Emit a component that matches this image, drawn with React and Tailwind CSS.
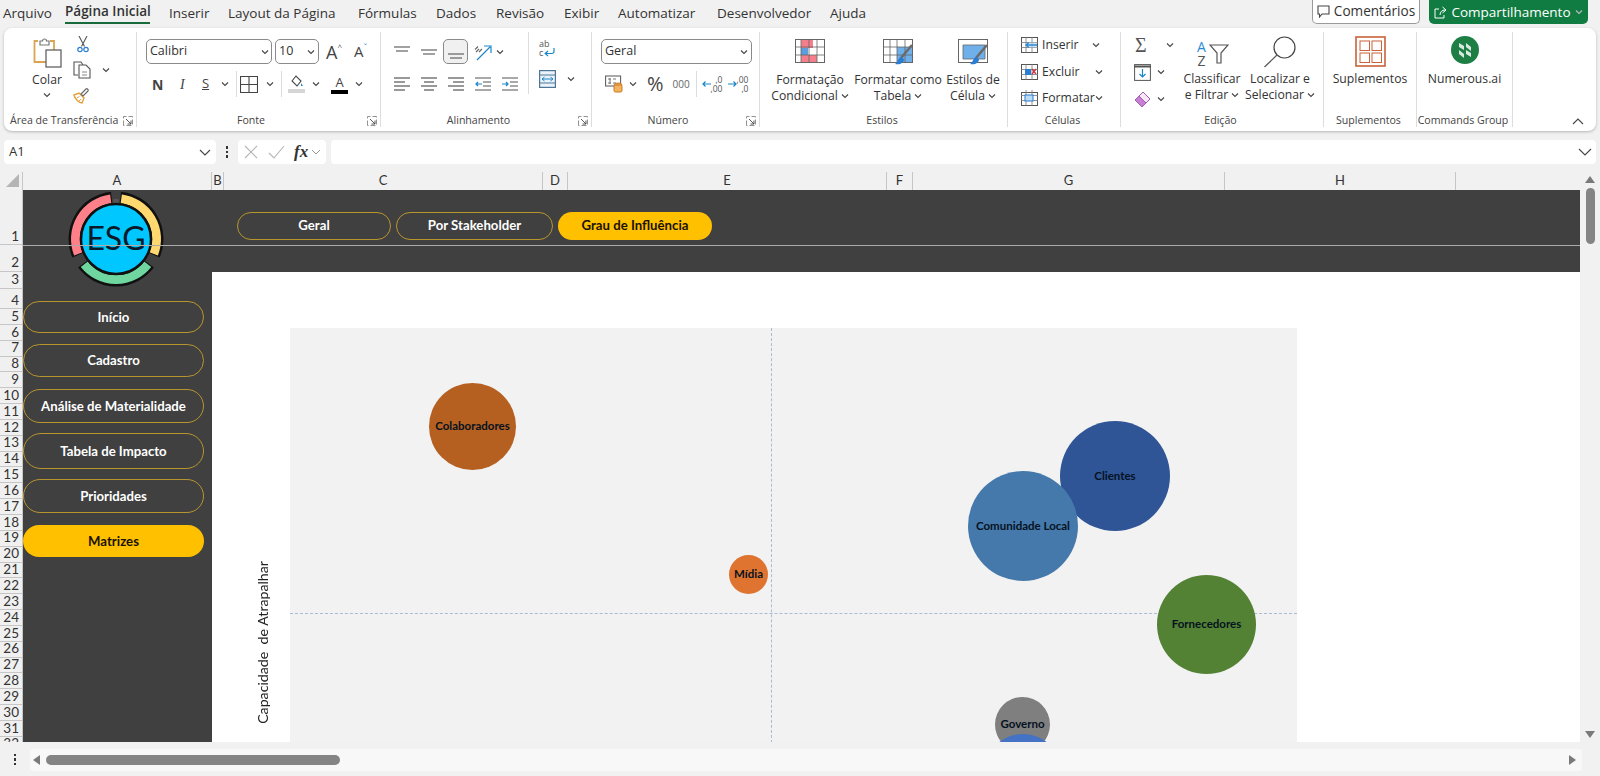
const tabs = [
  ['Arquivo', 'w-[48px] ml-[3px]'],
  ['Inserir', 'w-[39px] ml-[19px]'],
  ['Layout da Página', 'w-[109px] ml-[20px]'],
  ['Fórmulas', 'w-[57px] ml-[21px]'],
  ['Dados', 'w-[40px] ml-[21px]'],
  ['Revisão', 'w-[48px] ml-[20px]'],
  ['Exibir', 'w-[34px] ml-[20px]'],
  ['Automatizar', 'w-[78px] ml-[20px]'],
  ['Desenvolvedor', 'w-[93px] ml-[21px]'],
  ['Ajuda', 'w-[37px] ml-[20px]'],
]

const columns = [
  ['A', 'w-[189px]'],
  ['B', 'w-[12px]'],
  ['C', 'w-[319px]'],
  ['D', 'w-[25px]'],
  ['E', 'w-[319px]'],
  ['F', 'w-[26px]'],
  ['G', 'w-[312px]'],
  ['H', 'w-[231px]'],
]

const rowsSmall = Array.from({ length: 28 }, (_, i) => i + 5)

const sideButtons = [
  ['Início', 'h-[32px] mt-[13px]'],
  ['Cadastro', 'h-[33px] mt-[11px]'],
  ['Análise de Materialidade', 'h-[34px] mt-[12px]'],
  ['Tabela de Impacto', 'h-[36px] mt-[10px]'],
  ['Prioridades', 'h-[34px] mt-[10px]'],
]

function Chev({ className = '' }) {
  return (
    <svg width="8" height="6" viewBox="0 0 8 6" className={`shrink-0 ${className}`}>
      <path d="M1 1.5 4 4.5 7 1.5" fill="none" stroke="#444" strokeWidth="1.1" />
    </svg>
  )
}

function Launcher() {
  return (
    <svg width="10" height="10" viewBox="0 0 10 10" className="shrink-0">
      <path d="M.5 9.5V.5h9v9z" fill="none" stroke="#777" strokeWidth=".8" strokeDasharray="5 2" />
      <path d="M3 3 8 8M8 4.5V8H4.5" fill="none" stroke="#444" strokeWidth=".9" />
    </svg>
  )
}

function Lines({ kind = 'left' }) {
  const y = [2, 6, 10, 14]
  const spans = {
    left: [[0, 16], [0, 11], [0, 16], [0, 11]],
    center: [[0, 16], [3, 13], [0, 16], [3, 13]],
    right: [[0, 16], [5, 16], [0, 16], [5, 16]],
  }[kind]
  return (
    <svg width="16" height="16" viewBox="0 0 16 16" className="shrink-0">
      {y.map((v, i) => (
        <path key={v} d={`M${spans[i][0]} ${v}H${spans[i][1]}`} stroke="#555" strokeWidth="1.2" />
      ))}
    </svg>
  )
}

function AlignV({ at }) {
  const ys = at === 'top' ? [3, 7] : at === 'mid' ? [6, 10] : [10, 14]
  return (
    <svg width="16" height="16" viewBox="0 0 16 16" className="shrink-0">
      <path d={`M0 ${ys[0]}H16M2 ${ys[1]}H14`} stroke="#444" strokeWidth="1.2" />
    </svg>
  )
}

function Indent({ right }) {
  return (
    <svg width="16" height="16" viewBox="0 0 16 16" className="shrink-0">
      <path d="M0 2H16M8 6H16M8 10H16M0 14H16" stroke="#555" strokeWidth="1.2" />
      <path d={right ? 'M0 8H6M4 6l2 2-2 2' : 'M7 8H1M3 6 1 8l2 2'} fill="none" stroke="#1a86c8" strokeWidth="1.2" />
    </svg>
  )
}

function GroupWrap({ width, label, launcher, left, children }) {
  return (
    <div className={`shrink-0 pt-[4px] ${width}`}>
      <div className="flex h-[95px] flex-col border-r border-[#dddddd]">
        <div className="h-[82px] min-h-0">{children}</div>
        <div className={`flex h-[13px] items-center text-[10.6px] text-[#444] ${left ? 'justify-between pl-[6px] pr-[3px]' : 'pr-[3px]'}`}>
          {left ? null : <span className="flex-1" />}
          <span className="whitespace-nowrap">{label}</span>
          {launcher ? (
            <span className={left ? '' : 'flex flex-1 justify-end pl-[12px]'}><Launcher /></span>
          ) : (
            <span className="flex-1" />
          )}
        </div>
      </div>
    </div>
  )
}

function BigLabel({ one, two, chev, className = '' }) {
  return (
    <div className={`flex flex-col items-center text-[12.2px] leading-[16px] text-[#333] ${className}`}>
      <span className="whitespace-nowrap">{one}</span>
      <span className="flex items-center gap-[3px] whitespace-nowrap">
        {two}
        {chev && <Chev />}
      </span>
    </div>
  )
}

function PasteIcon() {
  return (
    <svg width="30" height="32" viewBox="0 0 30 32">
      <path d="M6 5H2.500V26H14M18 5h4v9" fill="none" stroke="#dba550" strokeWidth="1.8" />
      <path d="M8 5h2.500a2 2 0 0 1 4 0H17v4H8z" fill="#fff" stroke="#777" strokeWidth="1.200" />
      <rect x="14" y="14" width="15" height="17" fill="#fff" stroke="#555" strokeWidth="1.200" />
    </svg>
  )
}

function CutIcon() {
  return (
    <svg width="12" height="17" viewBox="0 0 12 17">
      <path d="M2 0 7.500 10.500M10 0 4.500 10.500" fill="none" stroke="#555" strokeWidth="1.100" />
      <circle cx="3" cy="13.500" r="2.200" fill="none" stroke="#2b7cd3" strokeWidth="1.200" />
      <circle cx="9" cy="13.500" r="2.200" fill="none" stroke="#2b7cd3" strokeWidth="1.200" />
    </svg>
  )
}

function CopyIcon() {
  return (
    <svg width="18" height="18" viewBox="0 0 18 18">
      <path d="M5 14H1V1h7l2 3" fill="none" stroke="#555" strokeWidth="1.100" />
      <path d="M6 4h7l4 4v9H6z" fill="#fff" stroke="#555" strokeWidth="1.100" />
      <path d="M9 11h5M9 14h5" stroke="#888" />
    </svg>
  )
}

function BrushIcon() {
  return (
    <svg width="17" height="17" viewBox="0 0 17 17">
      <path d="M1 8 6 6l5 5-2 5c-3 0-7-4-8-8z" fill="#fff" stroke="#e2a03f" strokeWidth="1.400" />
      <path d="M4 11l2.500-1.500M6 14l2-2" stroke="#e2a03f" />
      <path d="M8 7l5-5c1-1 3 1 2 2l-5 5z" fill="#fff" stroke="#666" strokeWidth="1.100" />
    </svg>
  )
}

function WrapIcon() {
  return (
    <span className="flex h-[20px] w-[20px] flex-col text-[9px] leading-[8px] text-[#555]">
      <span>ab</span>
      <span className="flex items-center gap-[1px]">
        c
        <svg width="11" height="9" viewBox="0 0 11 9">
          <path d="M10 0v3.500a2 2 0 0 1-2 2H1M4 3 1.200 5.500 4 8" fill="none" stroke="#1a86c8" strokeWidth="1.200" />
        </svg>
      </span>
    </span>
  )
}

function MergeIcon() {
  return (
    <svg width="17" height="18" viewBox="0 0 17 18">
      <rect x=".6" y=".6" width="15.800" height="16.800" fill="#eaf3fb" stroke="#4f7596" strokeWidth="1.200" />
      <path d="M1 5h15M1 13h15" stroke="#4f7596" />
      <path d="M3 9h11M5.500 7 3 9l2.500 2M11.500 7 14 9l-2.500 2" fill="none" stroke="#1a86c8" />
    </svg>
  )
}

function OrientIcon() {
  return (
    <svg width="18" height="18" viewBox="0 0 18 18">
      <path d="M3 17 16 4M10 3h7v7" fill="none" stroke="#1a86c8" strokeWidth="1.200" />
      <path d="M1 6.500 4 3.500M2 9l3-3M5 9l3-3" stroke="#666" strokeWidth="1.100" />
    </svg>
  )
}

function FillIcon() {
  return (
    <svg width="17" height="18" viewBox="0 0 17 18">
      <path d="M4 6 8 1l5 5-4 5z" fill="#fff" stroke="#444" strokeWidth="1.100" />
      <path d="M13 8l2 3-2 0z" fill="#1a86c8" />
      <rect x="0" y="14" width="17" height="4" fill="#d6d6d6" />
    </svg>
  )
}

function CurrencyIcon() {
  return (
    <svg width="18" height="18" viewBox="0 0 18 18">
      <rect x=".6" y="1" width="15" height="10" fill="#fff" stroke="#555" />
      <path d="M3 4h3M3 8h3M5 3v6M8 4h3M8 8h3" stroke="#777" />
      <ellipse cx="13" cy="10" rx="4" ry="2" fill="#f3b35f" stroke="#c77a23" />
      <rect x="9" y="10" width="8" height="7" rx="1.500" fill="#f3b35f" stroke="#c77a23" />
    </svg>
  )
}

function DecIcon({ up }) {
  return (
    <span className="flex h-[20px] w-[19px] items-center">
      <svg width="9" height="8" viewBox="0 0 9 8" className="shrink-0">
        <path d={up ? 'M0 4H8M5.500 1.500 8 4 5.500 6.500' : 'M9 4H1M3.500 1.500 1 4l2.500 2.500'} fill="none" stroke="#1a86c8" strokeWidth="1.200" />
      </svg>
      <span className="flex flex-col items-end text-[8.5px] leading-[9px] text-[#555]">
        <span>{up ? ',00' : ',0'}</span>
        <span>{up ? ',0' : ',00'}</span>
      </span>
    </span>
  )
}

function CondIcon() {
  return (
    <svg width="30" height="24" viewBox="0 0 30 24">
      <rect x=".5" y=".5" width="29" height="23" fill="#fff" stroke="#666" />
      <path d="M6 1h12v8H6zM6 16h16v7H6z" fill="#f47f8a" />
      <path d="M6 9h7v7H6z" fill="#5c9ee0" />
      <path d="M6 0v24M14 0v24M22 0v24M0 8h30M0 16h30" stroke="#666" strokeWidth=".8" />
    </svg>
  )
}

function TableIcon() {
  return (
    <svg width="31" height="28" viewBox="0 0 31 28">
      <rect x=".5" y=".5" width="29" height="23" fill="#fff" stroke="#666" />
      <path d="M14 8h15v15H14z" fill="#6fb0ea" />
      <path d="M7 0v24M14 0v24M22 0v24M0 8h30M0 16h30" stroke="#666" strokeWidth=".8" />
      <path d="M29 6 18 19" stroke="#6a6a6a" strokeWidth="2.500" />
      <path d="M18 18c-3 1-2 4-6 7 5 1 9-1 9-5z" fill="#2b7cd3" />
    </svg>
  )
}

function CellStyleIcon() {
  return (
    <svg width="31" height="28" viewBox="0 0 31 28">
      <rect x=".5" y=".5" width="29" height="23" fill="#fff" stroke="#666" />
      <path d="M5 6h22v14H5z" fill="#6fb0ea" stroke="#666" strokeWidth=".8" />
      <path d="M29 6 18 19" stroke="#6a6a6a" strokeWidth="2.500" />
      <path d="M18 18c-3 1-2 4-6 7 5 1 9-1 9-5z" fill="#2b7cd3" />
    </svg>
  )
}

function CellOp({ kind }) {
  return (
    <svg width="17" height="16" viewBox="0 0 17 16" className="shrink-0">
      <rect x=".5" y={kind === 'fmt' ? 2.500 : .5} width="16" height={kind === 'fmt' ? 13 : 15} fill="#fff" stroke="#555" />
      <path d="M0 5.500h17M0 10.500h17M5 0v16M11 0v16" stroke="#777" strokeWidth=".8" />
      {kind === 'ins' && <rect x="8" y="5.500" width="8" height="5" fill="#bcdcf5" opacity=".7" />}
      {kind === 'ins' && <path d="M5 8h11M8 5.500 5 8l3 2.500" fill="none" stroke="#2b8ad6" strokeWidth="1.300" />}
      {kind === 'del' && <rect x="4" y="5" width="6" height="6" fill="#2b7cd3" />}
      {kind === 'del' && <path d="M11 5l4 5M15 5l-4 5" stroke="#d13438" strokeWidth="1.300" />}
      {kind === 'fmt' && <rect x="4" y="5" width="8" height="6" fill="#bcdcf5" stroke="#2b7cd3" />}
    </svg>
  )
}

function FindIcon() {
  return (
    <svg width="32" height="32" viewBox="0 0 32 32">
      <circle cx="20.500" cy="11.500" r="10.500" fill="none" stroke="#444" strokeWidth="1.200" />
      <path d="M13 19 .5 31" stroke="#555" strokeWidth="1.200" />
    </svg>
  )
}

function SortIcon() {
  return (
    <span className="flex h-[32px] w-[34px] items-end">
      <span className="flex w-[13px] flex-col items-center text-[14px] leading-[14px]">
        <span className="text-[#2b8ad6]">A</span>
        <span className="text-[#555]">Z</span>
      </span>
      <svg width="20" height="20" viewBox="0 0 20 20" className="mb-[4px] ml-[1px]">
        <path d="M1 1h18l-7 8v10H8V9z" fill="#fff" stroke="#555" strokeWidth="1.200" />
      </svg>
    </span>
  )
}

function AddinIcon() {
  return (
    <svg width="31" height="31" viewBox="0 0 31 31">
      <rect x="1" y="1" width="29" height="29" fill="#fff" stroke="#c8633a" strokeWidth="1.600" />
      <rect x="5" y="5" width="9.500" height="9.500" fill="none" stroke="#c8633a" />
      <rect x="17" y="5" width="9.500" height="9.500" fill="none" stroke="#c8633a" />
      <rect x="5" y="17" width="9.500" height="9.500" fill="none" stroke="#c8633a" />
      <rect x="17" y="17" width="9.500" height="9.500" fill="none" stroke="#c8633a" />
    </svg>
  )
}

function NumerousIcon() {
  return (
    <svg width="28" height="28" viewBox="0 0 28 28">
      <circle cx="14" cy="14" r="14" fill="#1e7f45" />
      <path d="M8 7l5 3v4L8 11zM15 7l5 4v4l-5-4zM8 14l5 4v4l-5-4zM15 14l5 3v4l-5-3z" fill="#dbe9e0" />
    </svg>
  )
}

function arcPath(r, a0, a1) {
  const pt = (a) => {
    const t = ((a - 90) * Math.PI) / 180
    return `${48 + r * Math.cos(t)} ${48 + r * Math.sin(t)}`
  }
  return `M${pt(a0)}A${r} ${r} 0 0 1 ${pt(a1)}`
}

function Logo() {
  const segs = [
    [6, 113, '#ffd970'],
    [127, 233, '#6fd6a0'],
    [247, 354, '#ff8088'],
  ]
  return (
    <svg width="96" height="97" viewBox="0 0 96 97" className="block">
      {segs.map(([a, b]) => (
        <path key={a} d={arcPath(40.500, a, b)} fill="none" stroke="#111" strokeWidth="14" />
      ))}
      {segs.map(([a, b, c]) => (
        <path key={c} d={arcPath(40.500, a + 1.500, b - 1.500)} fill="none" stroke={c} strokeWidth="9" />
      ))}
      <rect x="45.500" y="8" width="5" height="5" fill="#555" />
      <circle cx="48" cy="48" r="35" fill="#00c7ff" stroke="#111" strokeWidth="2.500" />
      <text x="48" y="59" textAnchor="middle" fontSize="32" fill="#0a1a2a" fontFamily="Lato">ESG</text>
    </svg>
  )
}

function Bubble({ label, className }) {
  return (
    <div className={`absolute flex items-center justify-center rounded-full text-[11.5px] font-bold whitespace-nowrap text-[#05121f] ${className}`}>
      {label}
    </div>
  )
}

function Ribbon() {
  return (
    <div className="mx-[4px] flex h-[103px] shrink-0 rounded-lg bg-white shadow-[0_1px_3px_rgba(0,0,0,0.25)]">
      {/* Área de Transferência */}
      <GroupWrap width="w-[133px]" label="Área de Transferência" launcher left>
        <div className="flex pt-[4px]">
          <div className="ml-[26px] flex w-[34px] flex-col items-center">
            <PasteIcon />
            <span className="mt-[4px] text-[12.2px] leading-[16px] text-[#333]">Colar</span>
            <Chev className="mt-[4px]" />
          </div>
          <div className="ml-[9px] flex flex-col gap-[8px]">
            <span className="ml-[4px]"><CutIcon /></span>
            <span className="flex items-center gap-[11px]"><CopyIcon /><Chev /></span>
            <BrushIcon />
          </div>
        </div>
      </GroupWrap>

      {/* Fonte */}
      <GroupWrap width="w-[244px]" label="Fonte" launcher>
        <div className="flex flex-col pl-[9px] pt-[7px]">
          <div className="flex items-center">
            <div className="flex h-[25px] w-[126px] items-center justify-between rounded-[5px] border border-[#8a8a8a] px-[3px] pr-[2px] text-[12.5px] text-[#333]">
              Calibri <Chev />
            </div>
            <div className="ml-[3px] flex h-[25px] w-[44px] items-center justify-between rounded-[5px] border border-[#8a8a8a] px-[3px] pr-[3px] text-[12.5px] text-[#333]">
              10 <Chev />
            </div>
            <span className="ml-[7px] flex w-[18px] items-start text-[18px] leading-none text-[#444]">A<span className="text-[8px] leading-[8px] text-[#555]">^</span></span>
            <span className="ml-[10px] flex w-[18px] items-start text-[15px] leading-none text-[#444]">A<span className="text-[9px] leading-[8px] text-[#1a86c8]">ˇ</span></span>
          </div>
          <div className="mt-[7px] flex h-[26px] items-center">
            <span className="ml-[6px] w-[14px] text-[14px] font-bold text-[#444]">N</span>
            <span className="ml-[14px] w-[8px] font-['Liberation_Serif',serif] text-[14px] text-[#444] italic">I</span>
            <span className="ml-[14px] w-[10px] text-[13px] text-[#444] underline">S</span>
            <Chev className="ml-[9px]" />
            <span className="ml-[7px] h-[26px] w-px bg-[#dcdcdc]" />
            <svg width="18" height="17" viewBox="0 0 18 17" className="ml-[3px]">
              <path d="M.5.5h17v16H.5zM9 0v17M0 8.500h18" fill="none" stroke="#444" strokeWidth="1.100" />
            </svg>
            <Chev className="ml-[8px]" />
            <span className="ml-[7px] h-[26px] w-px bg-[#dcdcdc]" />
            <span className="ml-[6px]"><FillIcon /></span>
            <Chev className="ml-[7px]" />
            <span className="ml-[11px] flex h-[20px] w-[17px] flex-col items-center border-b-4 border-black text-[13px] leading-[16px] text-[#444]">A</span>
            <Chev className="ml-[7px]" />
          </div>
        </div>
      </GroupWrap>

      {/* Alinhamento */}
      <GroupWrap width="w-[211px]" label="Alinhamento" launcher>
        <div className="flex">
          <div className="flex w-[147px] flex-col pl-[13px] pt-[7px]">
            <div className="flex h-[25px] items-center">
              <AlignV at="top" />
              <span className="ml-[11px]"><AlignV at="mid" /></span>
              <span className="ml-[6px] flex h-[25px] w-[25px] items-center justify-center rounded-[5px] border border-[#8a8a8a] bg-[#f0f0f0]"><AlignV at="bot" /></span>
              <span className="ml-[6px]"><OrientIcon /></span>
              <Chev className="ml-[4px]" />
            </div>
            <div className="mt-[7px] flex h-[26px] items-center gap-[11px]">
              <Lines kind="left" />
              <Lines kind="center" />
              <Lines kind="right" />
              <Indent />
              <Indent right />
            </div>
          </div>
          <div className="flex h-[62px] border-l border-[#dddddd] pl-[10px] pt-[8px]">
            <div className="flex flex-col">
              <WrapIcon />
              <div className="mt-[10px] flex items-center gap-[11px]"><MergeIcon /><Chev /></div>
            </div>
          </div>
        </div>
      </GroupWrap>

      {/* Número */}
      <GroupWrap width="w-[168px]" label="Número" launcher>
        <div className="flex flex-col pl-[9px] pt-[7px]">
          <div className="flex h-[25px] w-[151px] items-center justify-between rounded-[5px] border border-[#8a8a8a] px-[3px] text-[12.5px] text-[#333]">
            Geral <Chev />
          </div>
          <div className="mt-[7px] flex h-[26px] items-center">
            <span className="ml-[4px]"><CurrencyIcon /></span>
            <Chev className="ml-[6px]" />
            <span className="ml-[10px] text-[20px] leading-none text-[#444]">%</span>
            <span className="ml-[9px] w-[18px] text-[10px] text-[#666]">000</span>
            <span className="ml-[5px] h-[26px] w-px bg-[#dcdcdc]" />
            <span className="ml-[5px]"><DecIcon /></span>
            <span className="ml-[7px]"><DecIcon up /></span>
          </div>
        </div>
      </GroupWrap>

      {/* Estilos */}
      <GroupWrap width="w-[248px]" label="Estilos">
        <div className="flex pt-[7px]">
          <div className="flex w-[92px] flex-col items-center pl-[8px]">
            <CondIcon />
            <BigLabel one="Formatação" two="Condicional" chev className="mt-[9px]" />
          </div>
          <div className="flex w-[92px] flex-col items-center">
            <TableIcon />
            <BigLabel one="Formatar como" two="Tabela" chev className="mt-[5px]" />
          </div>
          <div className="flex w-[58px] flex-col items-center">
            <CellStyleIcon />
            <BigLabel one="Estilos de" two="Célula" chev className="mt-[5px]" />
          </div>
        </div>
      </GroupWrap>

      {/* Células */}
      <GroupWrap width="w-[113px]" label="Células">
        <div className="flex flex-col gap-[8.500px] pl-[13px] pt-[4px] text-[12.2px] leading-[18px] text-[#333]">
          <div className="flex items-center"><CellOp kind="ins" /><span className="ml-[4px] w-[50px]">Inserir</span><Chev /></div>
          <div className="flex items-center"><CellOp kind="del" /><span className="ml-[4px] w-[53px]">Excluir</span><Chev /></div>
          <div className="flex items-center"><CellOp kind="fmt" /><span className="ml-[4px] w-[53px]">Formatar</span><Chev /></div>
        </div>
      </GroupWrap>

      {/* Edição */}
      <GroupWrap width="w-[203px]" label="Edição">
        <div className="flex pt-[4px]">
          <div className="ml-[13px] flex w-[44px] flex-col gap-[9px]">
            <div className="flex h-[18px] items-center">
              <span className="w-[28px] pl-[1px] font-['Liberation_Serif',serif] text-[20px] leading-none text-[#555]">Σ</span>
              <Chev className="ml-[4px]" />
            </div>
            <div className="flex h-[18px] items-center">
              <svg width="17" height="17" viewBox="0 0 17 17">
                <rect x=".6" y=".6" width="15.800" height="15.800" fill="#fff" stroke="#555" />
                <path d="M0 2.500h17" stroke="#555" strokeWidth="2" />
                <path d="M8.500 5v8M5.500 10l3 3 3-3" fill="none" stroke="#1a86c8" strokeWidth="1.200" />
              </svg>
              <Chev className="ml-[6px]" />
            </div>
            <div className="flex h-[18px] items-center">
              <svg width="17" height="17" viewBox="0 0 17 17">
                <path d="M1 9 9 1l7 7-8 8z" fill="#c77fd3" stroke="#a35db0" />
                <path d="M5 5 9 1l7 7-4 4z" fill="#f6e6f8" stroke="#a35db0" />
              </svg>
              <Chev className="ml-[6px]" />
            </div>
          </div>
          <div className="flex w-[68px] flex-col items-center">
            <SortIcon />
            <BigLabel one="Classificar" two="e Filtrar" chev className="mt-[3px]" />
          </div>
          <div className="flex w-[68px] flex-col items-center">
            <FindIcon />
            <BigLabel one="Localizar e" two="Selecionar" chev className="mt-[3px]" />
          </div>
        </div>
      </GroupWrap>

      {/* Suplementos */}
      <GroupWrap width="w-[93px]" label="Suplementos">
        <div className="flex flex-col items-center pt-[4px]">
          <AddinIcon />
          <span className="mt-[4px] text-[12.2px] leading-[16px] text-[#333]">Suplementos</span>
        </div>
      </GroupWrap>

      {/* Commands Group */}
      <GroupWrap width="w-[96px]" label="Commands Group">
        <div className="flex flex-col items-center pt-[4px]">
          <NumerousIcon />
          <span className="mt-[7px] text-[12.2px] leading-[16px] text-[#333]">Numerous.ai</span>
        </div>
      </GroupWrap>

      <div className="flex flex-1 items-end justify-end pr-[12px] pb-[6px]">
        <svg width="12" height="7" viewBox="0 0 12 7">
          <path d="M1 6 6 1l5 5" fill="none" stroke="#444" strokeWidth="1.100" />
        </svg>
      </div>
    </div>
  )
}

function RowHeader() {
  const cell = 'flex justify-end border-b border-[#c6c6c6] pr-[3px] leading-none'
  return (
    <div className="w-[23px] shrink-0 overflow-hidden border-r border-[#c6c6c6] bg-[#f0f0f0] font-['Lato',sans-serif] text-[13.5px] text-[#333]">
      <div className={`${cell} h-[55px] items-end pb-[1px]`}>1</div>
      <div className={`${cell} h-[26.5px] items-end pb-[1px]`}>2</div>
      <div className={`${cell} h-[17.5px] items-center`}>3</div>
      <div className={`${cell} h-[20px] items-end pb-[1px]`}>4</div>
      {rowsSmall.map((n) => (
        <div key={n} className={`${cell} h-[15.85px] items-center`}>{n}</div>
      ))}
    </div>
  )
}

export default function App() {
  return (
    <div className="flex h-[776px] w-[1600px] flex-col overflow-hidden bg-[#f1f1f1] font-['Open_Sans',sans-serif] text-[#333]">
      {/* abas */}
      <div className="flex h-[28px] shrink-0 items-start">
        <div className="flex w-[1312px] items-center pt-[1px] text-[13.5px] leading-[20px]">
          <span className={`${tabs[0][1]} whitespace-nowrap`}>{tabs[0][0]}</span>
          <span className="ml-[14px] w-[85px] border-b-2 border-[#1a6b3c] pb-[1px] font-semibold whitespace-nowrap">Página Inicial</span>
          {tabs.slice(1).map(([t, c]) => (
            <span key={t} className={`${c} whitespace-nowrap`}>{t}</span>
          ))}
        </div>
        <div className="flex h-[24px] w-[108px] items-center justify-center gap-[4px] rounded-b-[5px] border border-t-0 border-[#9a9a9a] bg-white text-[13.6px]">
          <svg width="13" height="13" viewBox="0 0 13 13">
            <path d="M1 1h11v8H5l-2.500 3V9H1z" fill="none" stroke="#444" strokeWidth="1.100" />
          </svg>
          Comentários
        </div>
        <div className="ml-[9px] flex h-[24px] w-[159px] items-center justify-center gap-[4px] rounded-b-[5px] bg-[#107c41] text-[13.5px] text-white">
          <svg width="13" height="13" viewBox="0 0 13 13">
            <path d="M5 3H1v9h9V9M6 9c0-3 2-5 5-5M8.500 1 12 4 8.500 7" fill="none" stroke="#fff" strokeWidth="1" />
          </svg>
          Compartilhamento
          <Chev className="invert" />
        </div>
      </div>

      <Ribbon />

      {/* barra de fórmulas */}
      <div className="mt-[9px] flex h-[24px] shrink-0 items-center px-[4px] text-[13px]">
        <div className="flex h-full w-[212px] items-center justify-between rounded-[4px] bg-white px-[5px]">
          A1
          <svg width="12" height="7" viewBox="0 0 12 7"><path d="M1 1l5 5 5-5" fill="none" stroke="#444" strokeWidth="1.100" /></svg>
        </div>
        <div className="flex w-[22px] flex-col items-center gap-[2px]">
          <span className="size-[2.500px] bg-[#333]" />
          <span className="size-[2.500px] bg-[#333]" />
          <span className="size-[2.500px] bg-[#333]" />
        </div>
        <div className="flex h-full w-[88px] items-center rounded-[4px] bg-white pl-[6px]">
          <svg width="14" height="14" viewBox="0 0 14 14"><path d="M1 1l12 12M13 1 1 13" stroke="#b5b5b5" strokeWidth="1.100" /></svg>
          <svg width="17" height="14" viewBox="0 0 17 14" className="ml-[10px]"><path d="M1 8l5 5L16 1" fill="none" stroke="#b5b5b5" strokeWidth="1.100" /></svg>
          <span className="ml-[9px] font-['Liberation_Serif',serif] text-[17px] font-bold text-[#333] italic">fx</span>
          <svg width="10" height="6" viewBox="0 0 10 6" className="ml-[3px]"><path d="M1 1l4 4 4-4" fill="none" stroke="#999" /></svg>
        </div>
        <div className="ml-[5px] flex h-full flex-1 items-center justify-end rounded-[4px] bg-white pr-[4px]">
          <svg width="14" height="8" viewBox="0 0 14 8"><path d="M1 1l6 6 6-6" fill="none" stroke="#444" strokeWidth="1.100" /></svg>
        </div>
      </div>

      {/* planilha + rolagem vertical */}
      <div className="mt-[8px] flex h-[570px] shrink-0">
        <div className="flex w-[1580px] flex-col">
          <div className="flex h-[18px] shrink-0 font-['Lato',sans-serif] text-[13px] text-[#333]">
            <div className="flex w-[23px] items-end justify-end border-r border-[#c6c6c6] pr-[3px] pb-[3px]">
              <span className="h-0 w-0 border-b-[13px] border-l-[13px] border-b-[#b5b5b5] border-l-transparent" />
            </div>
            {columns.map(([c, w]) => (
              <div key={c} className={`${w} flex items-center justify-center border-r border-[#c6c6c6]`}>{c}</div>
            ))}
          </div>

          <div className="relative flex min-h-0 flex-1 overflow-hidden">
            <RowHeader />
            <div className="flex w-[189px] shrink-0 flex-col bg-[#404040] font-['Lato',sans-serif]">
              <div className="ml-[45px] pt-px"><Logo /></div>
              {sideButtons.map(([t, c]) => (
                <div key={t} className={`flex w-[181px] shrink-0 items-center justify-center rounded-full border border-[#b8962e] pt-px text-[13.2px] font-bold text-white ${c}`}>
                  {t}
                </div>
              ))}
              <div className="mt-[12px] flex h-[32px] w-[181px] shrink-0 items-center justify-center rounded-full bg-[#ffc000] pt-px text-[13.2px] font-bold text-[#1a1200]">
                Matrizes
              </div>
            </div>

            <div className="flex min-w-0 flex-1 flex-col font-['Lato',sans-serif]">
              <div className="flex h-[81.500px] shrink-0 items-start gap-[5px] bg-[#404040] pt-[22px] pl-[25px] text-[13.2px] font-bold text-white">
                <div className="flex h-[28px] w-[154px] items-center justify-center rounded-full border border-[#b8962e]">Geral</div>
                <div className="flex h-[28px] w-[157px] items-center justify-center rounded-full border border-[#b8962e]">Por Stakeholder</div>
                <div className="flex h-[28px] w-[154px] items-center justify-center rounded-full bg-[#ffc000] text-[#1a1200]">Grau de Influência</div>
              </div>
              <div className="relative min-h-0 flex-1 bg-white pt-[56px] pl-[78px]">
                <span className="absolute top-[289px] left-[42px] text-[14.2px] leading-[18px] whitespace-pre text-[#222] [writing-mode:vertical-rl] rotate-180">Capacidade  de Atrapalhar</span>
                {/* área do gráfico */}
                <div className="relative h-[420px] w-[1007px] overflow-hidden bg-[#f2f2f2]">
                  <span className="absolute top-0 left-[481px] h-full border-l border-dashed border-[#a9bcd4]" />
                  <span className="absolute top-[285px] left-0 w-full border-t border-dashed border-[#a9bcd4]" />
                  <Bubble label="Colaboradores" className="top-[55px] left-[139px] size-[87px] bg-[#b55f21]" />
                  <Bubble label="Mídia" className="top-[227px] left-[439px] size-[39px] bg-[#df7430]" />
                  <Bubble label="Clientes" className="top-[93px] left-[770px] size-[110px] bg-[#2f5597]" />
                  <Bubble label="Comunidade Local" className="top-[143px] left-[678px] size-[110px] bg-[#4579ab]" />
                  <Bubble label="Fornecedores" className="top-[247px] left-[867px] size-[99px] bg-[#548235]" />
                  <Bubble label="Governo" className="top-[369px] left-[705px] size-[55px] bg-[#7f7f7f]" />
                  <span className="absolute top-[406px] left-[694px] size-[78px] rounded-full bg-[#4472c4]" />
                </div>
              </div>
            </div>
            {/* linha da grade que passa por cima do fundo escuro */}
            <span className="absolute top-[55px] left-[23px] h-px w-[1557px] bg-[#ababab]" />
          </div>
        </div>

        <div className="flex w-[20px] flex-col items-center">
          <span className="mt-[4px] h-0 w-0 border-r-[5px] border-b-[7px] border-l-[5px] border-r-transparent border-b-[#7a7a7a] border-l-transparent" />
          <span className="mt-[5px] h-[56px] w-[9px] rounded-full bg-[#848484]" />
          <span className="mt-auto mb-[4px] h-0 w-0 border-t-[7px] border-r-[5px] border-l-[5px] border-t-[#7a7a7a] border-r-transparent border-l-transparent" />
        </div>
      </div>

      {/* rolagem horizontal */}
      <div className="flex flex-1 items-center pt-[1px]">
        <div className="flex w-[30px] flex-col items-center gap-[2px]">
          <span className="size-[2.500px] bg-[#333]" />
          <span className="size-[2.500px] bg-[#333]" />
          <span className="size-[2.500px] bg-[#333]" />
        </div>
        <div className="flex h-[22px] w-[1552px] items-center rounded-[3px] bg-[#f8f8f8] pr-[6px]">
          <span className="ml-[3px] h-0 w-0 border-t-[5px] border-r-[7px] border-b-[5px] border-t-transparent border-r-[#7a7a7a] border-b-transparent" />
          <span className="ml-[6px] h-[10px] w-[294px] rounded-full bg-[#848484]" />
          <span className="ml-auto h-0 w-0 border-t-[5px] border-b-[5px] border-l-[7px] border-t-transparent border-b-transparent border-l-[#7a7a7a]" />
        </div>
      </div>
    </div>
  )
}
